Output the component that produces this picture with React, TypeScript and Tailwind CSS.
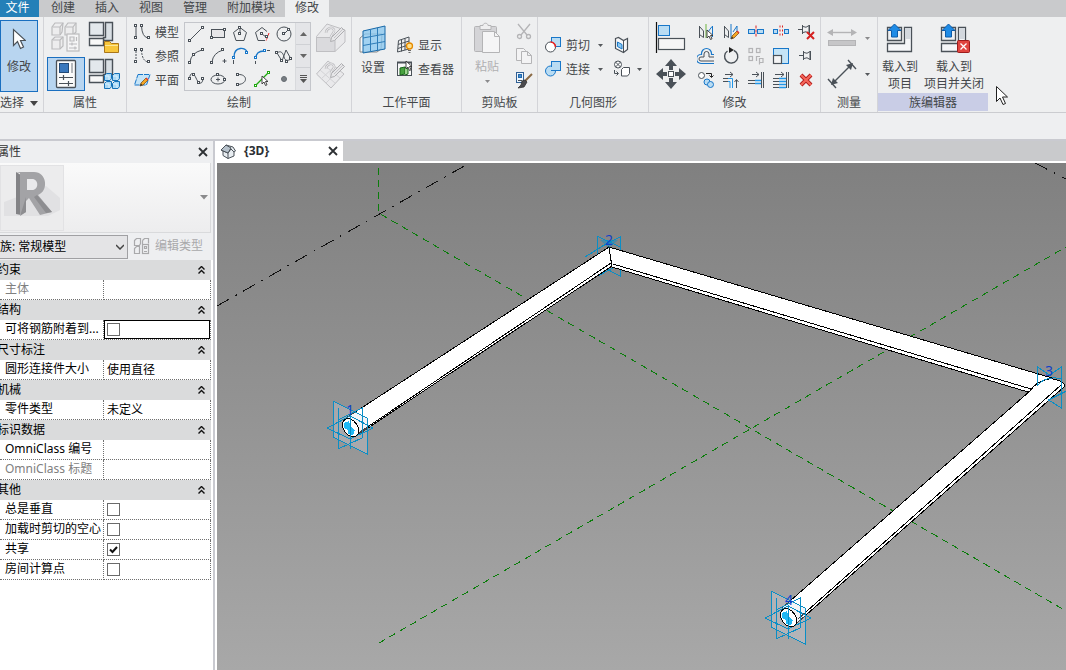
import { useState, type ReactNode } from "react";

const INK = "#4a5158";
const BLUE = "#1877c9";
const SKY = "#b9dcf3";
const OFF = "#b4b4b6";

function Icon({ w, h, children }: { w: number; h: number; children: ReactNode }) {
  return (
    <svg width={w} height={h} viewBox={`0 0 ${w} ${h}`} fill="none" stroke={INK} aria-hidden="true" className="shrink-0">
      {children}
    </svg>
  );
}

function Nodes({ at, color = INK }: { at: [number, number][]; color?: string }) {
  return (
    <g fill="#fff" stroke={color}>
      {at.map(([x, y]) => (
        <rect key={`${x}-${y}`} x={x - 0.5} y={y - 0.5} width="2" height="2" />
      ))}
    </g>
  );
}

function Caret({ dim = false }: { dim?: boolean }) {
  return (
    <svg width="5" height="3" viewBox="0 0 5 3" aria-hidden="true" className="shrink-0">
      <path d="M0 0h5L2.500 3z" fill={dim ? "#8a8a8c" : "#55585c"} />
    </svg>
  );
}

function Panel({ width, title, children, highlight = false, last = false }: { width: string; title: ReactNode; children: ReactNode; highlight?: boolean; last?: boolean }) {
  return (
    <section className={`flex shrink-0 flex-col ${width} ${last ? "" : "border-r border-[#d3d4d8]"}`}>
      <div className="flex h-[76px] items-start">{children}</div>
      <h2 className={`flex h-[18px] items-center justify-center pt-[2px] ${highlight ? "bg-[#c9cde6]" : ""}`}>{title}</h2>
    </section>
  );
}

function IconButton({ label, size, children, active = false, disabled = false }: { label: string; size: string; children: ReactNode; active?: boolean; disabled?: boolean }) {
  return (
    <button
      type="button"
      aria-label={label}
      disabled={disabled}
      className={`flex shrink-0 items-center justify-center ${size} ${active ? "border border-[#1a6fc0] bg-[#b8d5f0]" : ""}`}
    >
      {children}
    </button>
  );
}

const Pencil = ({ x, y }: { x: number; y: number }) => (
  <g transform={`translate(${x} ${y})`}>
    <path d="M0 9l1-3 5-5 2 2-5 5z" fill="#f5a623" stroke="#7a5320" strokeWidth=".8" />
    <path d="M5.500 1.500l1-1 2 2-1 1z" fill="#d33" stroke="none" />
    <path d="M0 9l1-2.500 1.500 1.500z" fill="#333" stroke="none" />
  </g>
);

const Pointer = ({ x, y }: { x: number; y: number }) => (
  <path transform={`translate(${x} ${y})`} d="M0 0v8l2-2 1.500 3.500 1.500-.7L3.500 5.500H6z" fill="#fff" stroke="#333" strokeWidth=".9" />
);

const FamilyBase = () => (
  <g strokeWidth="1.400" fill="#f5f7f9">
    <path d="M1.500 1.500h14v13h-14z" fill="#e3e8ec" />
    <path d="M17.500 1.500h7v18h-9v-3h2z" fill="#d9dfe4" />
    <path d="M1.500 17.500h14v7h-14z" fill="#f8f8f8" />
  </g>
);

const SketchPen = () => (
  <g>
    <path d="M11 11c0-5 7-7 8-3 1 3-4 5-3 8" strokeWidth="2.500" stroke="#bdbdc0" />
    <path d="M11 11c0-5 7-7 8-3 1 3-4 5-3 8" strokeWidth="1" stroke="#f4f4f5" />
    <path d="M15.500 19.500l1-4 10-10 3 3-10 10z" fill="#e6e6e8" stroke="#aeaeb1" />
    <path d="M19 16l9-9" stroke="#c6c6c9" />
  </g>
);

function DrawIcon({ name }: { name: string }) {
  switch (name) {
    case "直线":
      return <Icon w={18} h={18}><path d="M3 15L15 3" /><Nodes at={[[2, 15], [15, 2]]} /></Icon>;
    case "矩形":
      return <Icon w={18} h={18}><rect x="2.500" y="4.500" width="13" height="8" fill="#e6e6e8" /><Nodes at={[[2, 12], [15, 4]]} /></Icon>;
    case "内接多边形":
      return <Icon w={18} h={18}><path d="M9 2.500l6.500 5-2.500 8H5l-2.500-8z" /><path d="M9 3v6" /><Nodes at={[[8, 2], [8, 8]]} /></Icon>;
    case "外接多边形":
      return <Icon w={18} h={18}><path d="M12 15.500H5l-2.500-8 6.500-5 5 4" /><path d="M9 9l4 3" /><path d="M16 8l-3 8" stroke="#e22" strokeDasharray="3 1" /><Nodes at={[[8, 8], [13, 11]]} /></Icon>;
    case "圆形":
      return <Icon w={18} h={18}><circle cx="9" cy="9" r="7" /><path d="M9 9l4-4" /><Nodes at={[[8, 8], [13, 4]]} /></Icon>;
    case "起点-终点-半径弧":
      return <Icon w={18} h={18}><path d="M3 15Q4 6 15 3" /><Nodes at={[[2, 15], [6, 7], [15, 2]]} /></Icon>;
    case "圆心-端点弧":
      return <Icon w={18} h={18}><path d="M3 15Q4 6 14 3M15.500 12v4M13.500 14h4" /><Nodes at={[[2, 15], [13, 2]]} /></Icon>;
    case "相切-端点弧":
      return <Icon w={18} h={18}><path d="M3 10C3-1 15 0 16 5" stroke={BLUE} strokeWidth="1.300" /><path d="M2.500 13v4" /><Nodes at={[[2, 10], [15, 5]]} color={BLUE} /></Icon>;
    case "圆角弧":
      return <Icon w={18} h={18}><path d="M3 11Q3 4 11 4" stroke={BLUE} strokeWidth="1.300" /><path d="M2.500 14v3M14 3.500h3" /><Nodes at={[[2, 10], [11, 3]]} color={BLUE} /></Icon>;
    case "样条曲线":
      return <Icon w={18} h={18}><path d="M2 6l5 8 4-11 5 9M2 6C6 3 8 6 9 10s4 4 7 2" /><Nodes at={[[1, 5], [6, 13], [11, 14], [15, 11]]} /></Icon>;
    case "通过点的样条曲线":
      return <Icon w={18} h={18}><path d="M2.500 9C3 1 7 3 9 8s6 8 7 1" /><Nodes at={[[2, 8], [6, 4], [11, 12], [15, 8]]} /></Icon>;
    case "椭圆":
      return <Icon w={18} h={18}><ellipse cx="9" cy="9.500" rx="7" ry="4.500" /><path d="M9 7.500v4M7 9.500h4" /><Nodes at={[[8, 4], [15, 9]]} /></Icon>;
    case "半椭圆":
      return <Icon w={18} h={18}><path d="M7 4.500C17 4 17 14 7 14.500" /><Nodes at={[[6, 4], [6, 14]]} /></Icon>;
    case "拾取线":
      return <Icon w={18} h={18}><path d="M3 15L15 3" stroke="#1fa80f" strokeWidth="1.300" /><Nodes at={[[2, 15], [15, 2]]} color="#1fa80f" /><Pointer x={9} y={6} /></Icon>;
    default:
      return <Icon w={18} h={18}><circle cx="9" cy="9" r="2.500" fill="#777d82" stroke="#666c72" /></Icon>;
  }
}

const drawTools = ["直线", "矩形", "内接多边形", "外接多边形", "圆形", "起点-终点-半径弧", "圆心-端点弧", "相切-端点弧", "圆角弧", "样条曲线", "通过点的样条曲线", "椭圆", "半椭圆", "拾取线", "点图元"];

function ModifyIcon({ name }: { name: string }) {
  switch (name) {
    case "镜像-拾取轴":
      return <Icon w={18} h={18}><path d="M2.500 3v12M2.500 3.500L6.500 8v6.500l-4-3" /><path d="M15.500 3v11M15 3.500L11 9" stroke={BLUE} /><path d="M9 1v14" stroke="#6cb33f" /><Pointer x={10} y={7} /></Icon>;
    case "镜像-绘制轴":
      return <Icon w={18} h={18}><path d="M2.500 3v12M2.500 3.500L6.500 8v6.500l-4-3" /><path d="M9 1v15M11 9l4-6v7" stroke={BLUE} /><Pencil x={9} y={7} /></Icon>;
    case "拆分图元":
      return <Icon w={18} h={18}><rect x="1.500" y="6.500" width="6" height="4" fill={SKY} stroke={BLUE} /><rect x="10.500" y="6.500" width="6" height="4" fill={SKY} stroke={BLUE} /><path d="M9 2.500v12" stroke="#d22" strokeDasharray="3 1" /></Icon>;
    case "用间隙拆分":
      return <Icon w={18} h={18}><rect x="1.500" y="6.500" width="4" height="4" fill={SKY} stroke={BLUE} /><rect x="12.500" y="6.500" width="4" height="4" fill={SKY} stroke={BLUE} /><path d="M8 2.500v12M10.500 2.500v12" stroke="#d22" strokeDasharray="2 2" /></Icon>;
    case "解锁":
      return <Icon w={18} h={18}><path d="M1 6.500h4M5.500 2v9M6 3.500q3 2 6-1v8q-3-3-6-1M12.500 2v9" /><path d="M10 9l7 7M17 9l-7 7" stroke="#d42020" strokeWidth="2" /></Icon>;
    case "偏移":
      return <Icon w={18} h={18}><path d="M17 14H4a1 1 0 0 1 0-4h3V7a2.500 2.500 0 0 1 5 0v3h5" /><path d="M17 16.500H4a3 3 0 0 1 0-9h.5V6.500a5 5 0 0 1 10 0v1H17" stroke={BLUE} strokeWidth="1.200" /></Icon>;
    case "旋转":
      return <Icon w={18} h={18}><path d="M5.500 4A6.600 6.600 0 1 0 12 3.500" strokeWidth="1.400" /><path d="M7 0l5 3-5 3z" fill="#222" stroke="none" /></Icon>;
    case "阵列":
      return <Icon w={18} h={18}><g stroke={OFF} strokeWidth="1.200"><rect x="2" y="1.500" width="3.500" height="4" /><rect x="9.500" y="1.500" width="3.500" height="4" /><rect x="2" y="9.500" width="3.500" height="4" /><path d="M9.500 14V9.500H13M12.500 17.500v-6H16v4h-3.500" /></g></Icon>;
    case "缩放":
      return <Icon w={18} h={18}><rect x="1.500" y="1.500" width="15" height="15" fill="#c5e4f6" stroke={BLUE} /><rect x="1.500" y="8.500" width="8" height="8" fill="#f4f4f5" strokeWidth="1.200" /></Icon>;
    case "锁定":
      return <Icon w={18} h={18}><path d="M2 8.500h4M6.500 4v9M7 5.500q3 2 6-1v8q-3-3-6-1M13.500 4v9" /></Icon>;
    case "复制":
      return <Icon w={18} h={18}><circle cx="4.500" cy="4.500" r="3" fill="#fff" /><circle cx="10" cy="11" r="3" fill={SKY} stroke={BLUE} /><circle cx="13.500" cy="13.500" r="3" fill={SKY} stroke={BLUE} /><path d="M9 2.500h5.500V6M12.500 4.500l2 2 2-2" stroke="#222" /></Icon>;
    case "修剪/延伸为角":
      return <Icon w={18} h={18}><path d="M3 3.500h8M8 1l3 2.500L8 6M14.500 17V9M12.500 11l2-2.500 2 2.500M1 7.500h5M1 10.500h5" /><path d="M6 7.500h4.500V17M6 10.500h2V17" stroke="#2196e8" /></Icon>;
    case "修剪/延伸单个图元":
      return <Icon w={18} h={18}><path d="M5 3.500h7M9 1l3 2.500L9 6M14.500 1v16M16.500 1v16M1 9.500h7M1 12.500h7" /><path d="M8 9.500h6M8 12.500h6" stroke="#2196e8" strokeWidth="1.300" /></Icon>;
    case "修剪/延伸多个图元":
      return <Icon w={18} h={18}><path d="M3 3.500h9M9 1l3 2.500L9 6M14.500 1v16M16.500 1v16M1 7.500h6M1 10.500h6M1 13.500h6M1 16.500h6" /><path d="M7 7.500h7M7 10.500h7M7 13.500h7M7 16.500h7" stroke="#2196e8" strokeWidth="1.300" /></Icon>;
    default:
      return <Icon w={18} h={18}><path d="M4 4l10 10M14 4L4 14" stroke="#b01818" strokeWidth="4" /><path d="M4 4l10 10M14 4L4 14" stroke="#f4665a" strokeWidth="2.400" /></Icon>;
  }
}

const modifyTools = ["镜像-拾取轴", "镜像-绘制轴", "拆分图元", "用间隙拆分", "解锁", "偏移", "旋转", "阵列", "缩放", "锁定", "复制", "修剪/延伸为角", "修剪/延伸单个图元", "修剪/延伸多个图元", "删除"];

function LoadIcon({ close = false }: { close?: boolean }) {
  return (
    <Icon w={32} h={32}>
      <path d="M3.500 5.500h14v13h-14z" fill="#eef0f2" strokeWidth="1.300" />
      <path d="M20.500 5.500h7v24h-24v-8h17z" fill="#f5f6f8" strokeWidth="1.300" />
      <path d="M21 6h6v11h-6z" fill="#d3d8de" stroke="none" />
      <path d="M10.500 2L17 8.500h-3.500V15h-6V8.500H4z" fill="#1e8be6" stroke="#0d5ba8" />
      {close && (
        <>
          <rect x="19.500" y="18.500" width="12" height="12" rx="1" fill="#e0453f" stroke="#9e1c1c" />
          <path d="M22.500 21.500l6 6M28.500 21.500l-6 6" stroke="#fff" strokeWidth="1.300" />
        </>
      )}
    </Icon>
  );
}

function LabeledButton({ label, icon, disabled = false }: { label: string; icon: ReactNode; disabled?: boolean }) {
  return (
    <button type="button" disabled={disabled} className={`flex h-6 items-center gap-1 whitespace-nowrap ${disabled ? "text-[#b0b0b2]" : ""}`}>
      {icon}
      <span className="pt-[2px]">{label}</span>
    </button>
  );
}

function Ribbon() {
  return (
    <div className="flex h-24 shrink-0 overflow-hidden border-b border-[#cbccd0] bg-[#eeeff0]">
      <Panel width="w-11" title={<button type="button" className="flex w-full items-center gap-[6px] whitespace-nowrap">选择<svg width="8" height="5" viewBox="0 0 8 5"><path d="M0 0h8L4 5z" fill="#444" /></svg></button>}>
        <button type="button" className="mt-[3px] flex h-[72px] w-[38px] flex-col items-center gap-[9px] border border-[#1a6fc0] bg-[#b8d5f0] pt-[7px]">
          <Icon w={14} h={22}>
            <path d="M1.500 1.500v16l4-4 3 7 3-1.500-3-6.500h5z" fill="#fff" strokeWidth="1.200" />
          </Icon>
          <span className="leading-4">修改</span>
        </button>
      </Panel>

      <Panel width="w-[83px]" title="属性">
        <div className="grid grid-cols-[38px_38px] gap-y-[3px] px-[3px] pt-[3px]">
          <IconButton label="类型属性" size="h-[34px] w-[38px]" disabled>
            <Icon w={32} h={32}>
              <g stroke="#bbbbbd" fill="#ededee" strokeWidth="1.200">
                <path d="M2 6l3-4h8l-1 9-2 3H2zM15 6l3-4h8v9l-3 3h-8zM2 19l3-3h8v9l-3 3H2z" />
                <path d="M2 6h8v8M10 6l3-4M15 6h8v8M23 6l3-4M2 19h8v9M10 19l3-3" />
                <rect x="17" y="13" width="12" height="17" fill="#f5f5f6" />
                <path d="M20 16h4v4h-4zM26.500 16v4M19 23h8M19 27h8M22 21.500v3M25 25.500v3" />
              </g>
            </Icon>
          </IconButton>
          <IconButton label="族类别和族参数" size="h-[34px] w-[38px]">
            <Icon w={32} h={32}>
              <FamilyBase />
              <path d="M16.500 20.500h5l2 2h7v9h-14z" fill="#f7c63c" stroke="#a9761a" />
              <path d="M17 24.500h13" stroke="#fce79a" />
            </Icon>
          </IconButton>
          <IconButton label="属性" size="h-[34px] w-[38px]" active>
            <Icon w={24} h={30}>
              <rect x="2.500" y="1.500" width="19" height="27" rx="1" fill="#fbfbfb" strokeWidth="1.300" />
              <rect x="5.500" y="4.500" width="9" height="9" fill="#3a78bd" stroke="#244b78" />
              <path d="M18 4v10" strokeWidth="2" stroke="#b5b8bc" />
              <path d="M5 18.500h14M5 24.500h14M9.500 16v5M14.500 22v5" strokeWidth="1.200" />
            </Icon>
          </IconButton>
          <IconButton label="族类型" size="h-[34px] w-[38px]">
            <Icon w={32} h={32}>
              <FamilyBase />
              <g fill="#a9d8f5" stroke="#1672b8">
                <path d="M16.500 17.500l2-2h5v5l-1.500 2h-5.500zM24.500 17.500l2-2h5v5l-1.500 2h-5.500zM16.500 25.500l2-2h5v5l-1.500 2h-5.500zM24.500 25.500l2-2h5v5l-1.500 2h-5.500z" />
                <path d="M17 18h4v4M25 18h4v4M17 26h4v4M25 26h4v4" stroke="#dff2fd" />
              </g>
            </Icon>
          </IconButton>
        </div>
      </Panel>

      <Panel width="w-[225px]" title="绘制">
        <div className="flex w-[57px] shrink-0 flex-col pl-[6px] pt-[3px]">
          <LabeledButton label="模型" icon={<Icon w={18} h={18}><path d="M3 4v10M8.500 3Q9 14 15 15" /><Nodes at={[[2, 2], [2, 14], [8, 2], [15, 14]]} /></Icon>} />
          <LabeledButton label="参照" icon={<Icon w={18} h={18}><path d="M3 4v10M8.500 3Q9 14 15 15" strokeDasharray="2 1" /><Nodes at={[[2, 2], [2, 14], [8, 2], [15, 14]]} /></Icon>} />
          <LabeledButton label="平面" icon={<Icon w={18} h={18}><path d="M5 3.500h12L13.500 14H1.500z" fill="#c5e4f7" stroke={BLUE} strokeDasharray="5 1" /><Pencil x={7} y={6} /></Icon>} />
        </div>
        <div className="mt-[5px] flex h-[69px] w-[127px] shrink-0 border border-[#c4c6cb]">
          <div className="grid grid-cols-5 grid-rows-3">
            {drawTools.map((t) => (
              <IconButton key={t} label={t} size="h-[22px] w-[22px]"><DrawIcon name={t} /></IconButton>
            ))}
          </div>
          <div className="grid flex-1 grid-rows-3 divide-y divide-[#cfd1d5] border-l border-[#d8dadd] bg-[#e4e5e8]">
            <button type="button" aria-label="向上滚动" className="flex items-center justify-center"><svg width="7" height="4" viewBox="0 0 7 4"><path d="M0 4h7L3.500 0z" fill="#666" /></svg></button>
            <button type="button" aria-label="向下滚动" className="flex items-center justify-center"><svg width="7" height="4" viewBox="0 0 7 4"><path d="M0 0h7L3.500 4z" fill="#666" /></svg></button>
            <button type="button" aria-label="展开" className="flex items-center justify-center"><svg width="7" height="8" viewBox="0 0 7 8"><path d="M0 0h7v1H0zM0 2h7v1H0zM0 4h7L3.500 8z" fill="#555" /></svg></button>
          </div>
        </div>
        <div className="flex flex-col pl-1 pt-[3px]">
          <IconButton label="在面上绘制" size="h-9 w-8" disabled>
            <Icon w={32} h={32}>
              <g stroke="#bfbfc2">
                <path d="M1.500 14.500L12 2l18 6v12L20 29.500H1.500z" fill="#e9e9eb" />
                <path d="M1.500 15.500H20v14H1.500z" fill="#dadadd" />
                <path d="M20 15.500L30 8" />
              </g>
              <SketchPen />
            </Icon>
          </IconButton>
          <IconButton label="在工作平面上绘制" size="h-9 w-8" disabled>
            <Icon w={32} h={32}>
              <g stroke="#bfbfc2">
                <path d="M1.500 16L13 3l16 13-13 14z" fill="#e9e9eb" />
                <path d="M5 12l15 13M9 7l16 13M6 21l14-13M11 25l13-13" stroke="#d3d3d6" />
              </g>
              <SketchPen />
            </Icon>
          </IconButton>
        </div>
      </Panel>

      <Panel width="w-[110px]" title="工作平面">
        <button type="button" className="flex w-[42px] shrink-0 flex-col items-center gap-[5px] pt-2">
          <Icon w={30} h={30}>
            <path d="M2 13l5-4h17l-1 15-4 3H2z" fill="#f7f8f9" stroke="#888" />
            <path d="M5 6L27 1v23L5 28z" fill="#8cc8ef" fillOpacity=".8" stroke="#1768a8" />
            <path d="M12.500 4.500V27M19.500 3v22.500M5 13l22-4M5 20.500l22-4" stroke="#2f7db8" />
          </Icon>
          <span className="leading-4">设置</span>
        </button>
        <div className="flex flex-col pl-[2px] pt-4">
          <LabeledButton label="显示" icon={<Icon w={18} h={18}><path d="M2.500 4.500L13 1v12L1.500 16zM5.500 3.500v12M9 2.500V14M2 8.500L13 5M2 12.500L12 9" /><circle cx="13.500" cy="10" r="3" fill="#ffe08a" stroke="#e58a00" strokeWidth="1.300" /><path d="M12 14.500h3M12.500 16.500h2" stroke="#666" /></Icon>} />
          <LabeledButton label="查看器" icon={<Icon w={18} h={18}><rect x="1.500" y="2.500" width="14" height="13" fill="#f8f8f8" /><path d="M1 2.500h15" strokeWidth="2" /><path d="M4 8l5-1v7l-5 1z" fill="#48a23f" stroke="#19651a" /><path d="M9 7l3 2v5l-3 1" fill="#9bd38d" stroke="#19651a" /><Pointer x={10} y={1} /></Icon>} />
        </div>
      </Panel>

      <Panel width="w-[76px]" title="剪贴板">
        <button type="button" disabled className="flex w-[50px] shrink-0 flex-col items-center gap-[5px] pt-[5px] text-[#b0b0b2]">
          <Icon w={28} h={32}>
            <g stroke={OFF}>
              <rect x="1.500" y="4.500" width="22" height="25" rx="1" fill="#d4d4d7" />
              <path d="M7 7.500v-4h3c0-3 5-3 5 0h3v4z" fill="#efeff0" />
              <path d="M9.500 9.500h12l5 5v16h-17z" fill="#f5f5f6" />
              <path d="M21.500 9.500v5h5" />
            </g>
          </Icon>
          <span className="leading-4">粘贴</span>
          <Caret dim />
        </button>
        <div className="flex flex-col pt-[3px]">
          <IconButton label="剪切到剪贴板" size="h-6 w-6" disabled>
            <Icon w={18} h={18}><g stroke={OFF} strokeWidth="1.300"><path d="M3 1l9 11M15 1L6 12" /><circle cx="4.500" cy="13.500" r="2" /><circle cx="13.500" cy="13.500" r="2" /></g></Icon>
          </IconButton>
          <IconButton label="复制到剪贴板" size="h-6 w-6" disabled>
            <Icon w={18} h={18}><g stroke={OFF} fill="#f3f3f4"><path d="M1.500 1.500h7l2 2v10h-9z" /><path d="M6.500 4.500h6l4 4v8h-10zM12.500 4.500v4h4" /></g></Icon>
          </IconButton>
          <IconButton label="匹配类型属性" size="h-6 w-6">
            <Icon w={18} h={18}><rect x="1.500" y="1.500" width="7" height="10" fill="#eef6fc" stroke="#2f5f95" /><rect x="3.500" y="3.500" width="3" height="3" fill="#3e8dd8" stroke="#2468aa" /><path d="M3 9.500h4" /><path d="M17 3l-7 7" stroke="#8a6a44" strokeWidth="2" /><path d="M10 9l2 2-3 5-6 1 3-3 1-4z" fill="#4b4b4e" stroke="#333" strokeWidth=".8" /></Icon>
          </IconButton>
        </div>
      </Panel>

      <Panel width="w-[111px]" title="几何图形">
        <div className="flex flex-col pl-[6px] pt-4">
          <div className="flex items-center gap-2">
            <LabeledButton label="剪切" icon={<Icon w={18} h={18}><rect x="7.500" y="1.500" width="9" height="9" fill={SKY} stroke={BLUE} /><circle cx="6.500" cy="11" r="5" fill="#fff" /><path d="M6.500 6a5 5 0 0 1 5 5" stroke="#e22" strokeWidth="1.500" /></Icon>} />
            <button type="button" aria-label="剪切选项"><Caret /></button>
          </div>
          <div className="flex items-center gap-2">
            <LabeledButton label="连接" icon={<Icon w={18} h={18}><circle cx="6.500" cy="11" r="5" fill={SKY} stroke={BLUE} /><rect x="7.500" y="1.500" width="9" height="9" fill={SKY} stroke={BLUE} /><path d="M6.500 7h4.500v3H7z" fill={SKY} stroke="none" /></Icon>} />
            <button type="button" aria-label="连接选项"><Caret /></button>
          </div>
        </div>
        <div className="flex flex-col pl-[7px] pt-4">
          <IconButton label="拆分面" size="h-6 w-6">
            <Icon w={18} h={18}><path d="M2.500 2.500l3-1 5 3 4-2v11l-4 3-8-4z" fill="#f7f7f8" strokeWidth="1.200" /><path d="M10.500 4.500v12" /><path d="M4.500 6l4.500 2.500v4.500l-4.500-2.500z" fill="#8cc8ef" stroke={BLUE} /></Icon>
          </IconButton>
          <div className="flex items-center">
            <IconButton label="取消连接几何图形" size="h-6 w-6">
              <Icon w={18} h={18}><circle cx="5" cy="4.500" r="3.500" fill="#fff" /><path d="M2.500 2l5 5M7.500 2l-5 5M1.500 10v3.500H5M3.500 11.500l2 2-2 2" /><path d="M8.500 9.500l2-2h6v6l-2 2.500h-6z" fill="#fff" /></Icon>
            </IconButton>
            <button type="button" aria-label="更多几何工具" className="pl-[3px]"><Caret /></button>
          </div>
        </div>
      </Panel>

      <Panel width="w-[172px]" title="修改">
        <div className="flex w-11 shrink-0 flex-col items-center pt-[3px]">
          <IconButton label="对齐" size="h-9 w-9">
            <Icon w={32} h={32}><path d="M1.500 0v31" stroke="#111" strokeWidth="1.200" /><rect x="3.500" y="3.500" width="11" height="10" fill={SKY} stroke={BLUE} /><rect x="3.500" y="16.500" width="26" height="11" fill="#f5f5f6" strokeWidth="1.200" /></Icon>
          </IconButton>
          <IconButton label="移动" size="h-9 w-9">
            <Icon w={32} h={32}><path d="M16 1l6 7h-4v4h-4V8h-4zM16 31l6-7h-4v-4h-4v4h-4zM1 16l7-6v4h4v4H8v4zM31 16l-7-6v4h-4v4h4v4z" fill={INK} stroke="none" /><rect x="13.500" y="13.500" width="5" height="5" fill="#fff" /></Icon>
          </IconButton>
        </div>
        <div className="grid grid-cols-[repeat(5,25px)] pt-[3px]">
          {modifyTools.map((t) => (
            <IconButton key={t} label={t} size="h-6 w-[25px]" disabled={t === "阵列"}><ModifyIcon name={t} /></IconButton>
          ))}
        </div>
      </Panel>

      <Panel width="w-[57px]" title="测量">
        <div className="flex flex-col pl-[6px] pt-[3px]">
          <div className="flex h-9 items-center gap-2">
            <IconButton label="测量距离" size="h-9 w-[30px]" disabled>
              <Icon w={30} h={22}><path d="M2 5.500h26" stroke={OFF} strokeWidth="1.400" /><path d="M0 5.500L6 2v7zM30 5.500L24 2v7z" fill={OFF} stroke="none" /><rect x="1.500" y="13.500" width="27" height="5" fill="#c6c6c8" stroke={OFF} /></Icon>
            </IconButton>
            <button type="button" aria-label="测量选项"><Caret dim /></button>
          </div>
          <div className="flex h-9 items-center gap-2">
            <IconButton label="对齐尺寸标注" size="h-9 w-[30px]">
              <Icon w={30} h={30}><path d="M5 25L25 5M1 20l8 9M21 1l8 9" strokeWidth="1.400" /><path d="M4 26l2-7 5 5zM26 4l-7 2 5 5z" fill={INK} stroke="none" /></Icon>
            </IconButton>
            <button type="button" aria-label="尺寸标注选项"><Caret /></button>
          </div>
        </div>
      </Panel>

      <Panel width="w-[110px]" title="族编辑器" highlight last>
        <button type="button" className="flex w-11 shrink-0 flex-col items-center pt-[5px] leading-[17px]">
          <LoadIcon />
          <span className="mt-1">载入到</span>
          <span>项目</span>
        </button>
        <button type="button" className="flex w-16 shrink-0 flex-col items-center whitespace-nowrap pt-[5px] leading-[17px]">
          <LoadIcon close />
          <span className="mt-1">载入到</span>
          <span>项目并关闭</span>
        </button>
      </Panel>
    </div>
  );
}

type Row = { label: string; value?: string; check?: boolean; focus?: boolean; dim?: boolean };

const groups: { name: string; rows: Row[] }[] = [
  { name: "约束", rows: [{ label: "主体", dim: true }] },
  { name: "结构", rows: [{ label: "可将钢筋附着到...", check: false, focus: true }] },
  { name: "尺寸标注", rows: [{ label: "圆形连接件大小", value: "使用直径" }] },
  { name: "机械", rows: [{ label: "零件类型", value: "未定义" }] },
  { name: "标识数据", rows: [{ label: "OmniClass 编号" }, { label: "OmniClass 标题", dim: true }] },
  { name: "其他", rows: [{ label: "总是垂直", check: false }, { label: "加载时剪切的空心", check: false }, { label: "共享", check: true }, { label: "房间计算点", check: false }] },
];

function Check({ label, initial }: { label: string; initial: boolean }) {
  const [on, setOn] = useState(initial);
  return (
    <span className="grid h-[13px] w-[13px]">
      <input type="checkbox" aria-label={label} checked={on} onChange={() => setOn(!on)} className="col-start-1 row-start-1 h-[13px] w-[13px] appearance-none border border-[#6a6a6a] bg-white" />
      {on && (
        <svg viewBox="0 0 13 13" className="pointer-events-none col-start-1 row-start-1 h-[13px] w-[13px]">
          <path d="M3 6.500l2.500 2.500 4.500-5" fill="none" stroke="#111" strokeWidth="2" />
        </svg>
      )}
    </span>
  );
}

function Close({ label }: { label: string }) {
  return (
    <button type="button" aria-label={label} className="flex h-4 w-4 items-center justify-center">
      <svg width="10" height="10" viewBox="0 0 10 10"><path d="M1 1l8 8M9 1L1 9" stroke="#2d3033" strokeWidth="1.800" /></svg>
    </button>
  );
}

function Properties() {
  return (
    <aside className="flex w-[213px] shrink-0 flex-col overflow-hidden bg-white text-black">
      <header className="flex h-[22px] items-center justify-between bg-[#eeeff1] pb-px pr-[2px] text-[#333]">
        <h2 className="-ml-[3px]">属性</h2>
        <Close label="关闭属性" />
      </header>
      <div className="h-[70px] bg-[#eeeff1] pr-[2px]">
        <button type="button" aria-label="类型选择器" className="flex h-[70px] w-full items-center justify-between border-b border-r border-[#d9dadc] bg-linear-to-b from-[#fafafa] to-[#ededee] pr-[2px]">
          <span className="flex h-[66px] w-16 items-center justify-center border border-[#e2e2e4] bg-[#ececed]">
            <svg width="60" height="60" viewBox="0 0 60 60" aria-hidden="true">
              <path d="M2 34L44 18l14 12v12L46 48H2z" fill="#e1e1e3" />
              <path d="M14 4l5 3v40l-5-1z" fill="#838386" />
              <path d="M14 4h18c13 0 15 19 4 23l14 17-12 3-11-17-3 3v11l-6 4V5z" fill="#a3a3a6" />
              <path d="M25 11v11h5c7 0 7-11 0-11z" fill="#e9e9eb" />
              <path d="M24 29l-5 16v2l5-3zM35 27l15 17-6 1-12-16z" fill="#8d8d90" />
            </svg>
          </span>
          <svg width="8" height="5" viewBox="0 0 8 5"><path d="M0 0h8L4 4.500z" fill="#8a8a8c" /></svg>
        </button>
      </div>
      <div className="flex h-[27px] items-center bg-[#eeeff1]">
        <span className="relative flex w-32 shrink-0 items-center">
          <select aria-label="族" className="h-6 w-full appearance-none border border-l-0 border-[#a0a0a3] bg-[#e4e4e6]">
            <option>族: 常规模型</option>
          </select>
          <svg width="8" height="6" viewBox="0 0 8 6" className="pointer-events-none absolute right-1"><path d="M0 1l4 4 4-4" fill="none" stroke="#444" strokeWidth="1.500" /></svg>
        </span>
        <button type="button" disabled className="flex items-center gap-1 pb-px pl-[5px] text-[#a9a9ab]">
          <Icon w={18} h={18}><g stroke="#a9a9ab" strokeWidth="1.200"><path d="M1.500 3.500l2-2h4v5l-1 2h-5zM9.500 3.500l2-2h4v5M1.500 11.500l2-2h3v7h-5zM9.500 3.500V7" /><rect x="9.500" y="7.500" width="6" height="9" /><path d="M11.500 9.500h2v2h-2zM11 14.500h3" /></g></Icon>
          编辑类型
        </button>
      </div>
      <table className="w-[211px] table-fixed border-separate border-spacing-0">
        <colgroup><col className="w-[104px]" /><col /></colgroup>
        {groups.map((g) => (
          <tbody key={g.name}>
            <tr className="h-5 bg-[#dadbdc]">
              <th colSpan={2} scope="colgroup" className="p-0 text-left font-normal">
                <button type="button" className="flex h-5 w-full items-center justify-between pb-px pr-[6px]">
                  <span className="-ml-[3px]">{g.name}</span>
                  <svg width="7" height="8" viewBox="0 0 7 8"><path d="M.5 3.500l3-3 3 3M.5 7.500l3-3 3 3" fill="none" stroke="#111" strokeWidth="1.400" /></svg>
                </button>
              </th>
            </tr>
            {g.rows.map((r) => (
              <tr key={r.label} className="h-5">
                <th scope="row" className="border-b border-r border-dotted border-[#707070] p-0 text-left font-normal">
                  <span className={`block h-[19px] overflow-hidden whitespace-nowrap pl-[5px] leading-[18px] ${r.dim ? "text-[#808080]" : ""}`}>{r.label}</span>
                </th>
                <td className="border-b border-r border-dotted border-[#707070] p-0">
                  <div className={`flex h-[19px] items-center pl-[3px] ${r.focus ? "outline outline-1 -outline-offset-1 outline-black" : ""}`}>
                    {r.check === undefined ? <span className="leading-[18px]">{r.value}</span> : <Check label={r.label} initial={r.check} />}
                  </div>
                </td>
              </tr>
            ))}
          </tbody>
        ))}
      </table>
    </aside>
  );
}

function PipeEnd({ x, y }: { x: number; y: number }) {
  return (
    <g transform={`translate(${x} ${y})`} stroke="#0a8ec6" fill="none">
      <path d="M-17 -26L17 -9v36L-17 10z" fill="#d8d8e0" fillOpacity=".3" />
      <path d="M-12 -7L12 -19v30L-12 22zM-12 -19v12M-23 1L0 -11 23 1 0 12z" />
      <ellipse cx="0" cy="1" rx="7" ry="10" transform="rotate(-35)" fill="#fff" stroke="#000" />
      <path d="M-6 -4l5-2 2 6 4 3-2 5-5-1v-4l-4-2z" fill="#20b8f4" stroke="none" />
      <path d="M0 -12v34" />
    </g>
  );
}

function Model() {
  return (
    <svg viewBox="217 163 849 507" preserveAspectRatio="xMinYMin slice" role="img" aria-label="三维视图" className="h-full w-full" fill="none">
      <g shapeRendering="crispEdges">
        <g stroke="#111" strokeDasharray="14 7 2 7">
          <path d="M217 306L466 165" />
          <path d="M1035 163l31 16" />
        </g>
        <g stroke="#0b7d0b" strokeDasharray="7 5">
          <path d="M378.500 168v45L1066 611" />
          <path d="M379 643L1066 247" />
        </g>
        <g stroke="#0a8ec6">
          <path d="M585 257l24-15M597.500 236v20M620.500 236v20M598 276l22-12M597 264l23 12v-9" />
        </g>
        <g fill="#fff" stroke="#000">
          <path d="M346 418L609 247l3 19L356 436z" />
          <path d="M357 434L611 263" />
          <path d="M609 247l443 131-24 14L612 267z" />
          <path d="M613 264l418 125" />
          <path d="M1030 391C1036 382 1046 378 1053 379Q1064 381 1065 386L797 623l-15-15z" />
          <path d="M1061 385L798 619" />
        </g>
        <PipeEnd x={350} y={427} />
        <PipeEnd x={788} y={617} />
        <g stroke="#0a8ec6">
          <path d="M597 236l23 11M620 237l-23 12" />
          <path d="M1037.500 386v-19l12 8 12-8v41l-13-8 18-9M1038 385q8-10 24-6" />
        </g>
      </g>
      <path d="M600 240h18l-9 8z" fill="#0a8ec6" fillOpacity=".5" />
      <g fill="#1240c8" fontSize="14" textAnchor="middle" className="font-['Noto_Sans']">
        <text x="350" y="415">1</text>
        <text x="609" y="245">2</text>
        <text x="1049" y="376">3</text>
        <text x="789" y="605">4</text>
      </g>
    </svg>
  );
}

const tabs = ["创建", "插入", "视图", "管理", "附加模块", "修改"];

export default function App() {
  return (
    <div className="relative flex h-screen flex-col overflow-hidden bg-[#eeeff1] font-['Noto_Sans','Noto_Sans_CJK_SC',sans-serif] text-xs text-[#44474a]">
      <nav className="flex h-[17px] shrink-0 overflow-hidden bg-[#c9cacc] leading-[15px]">
        <button type="button" className="mr-[2px] w-[39px] bg-[#2480b8] pb-[2px] pr-1 text-white">文件</button>
        {tabs.map((t) => (
          <button key={t} type="button" className={`px-[10px] pb-[2px] ${t === "修改" ? "bg-[#eeeff0]" : ""}`}>{t}</button>
        ))}
      </nav>
      <Ribbon />
      <div className="h-[26px] shrink-0" />
      <div className="flex min-h-0 flex-1 border-t-2 border-[#c9cad0]">
        <Properties />
        <main className="flex min-w-0 flex-1 flex-col border-l-2 border-[#c9cad0] bg-white pl-[2px]">
          <div className="flex h-5 shrink-0 bg-[#c9cacc]">
            <div className="flex w-[126px] items-center bg-white pl-[2px] pr-[2px] text-[#2c2f33]">
              <Icon w={18} h={18}>
                <path d="M2 8l5-5 7 2 2.500 4-1.500 1v4l-6 2.500-5-3V9z" fill="#e8edf1" />
                <path d="M9 16.500V10M4 9l5 2 3-4 3 3" />
                <path d="M7 3L2 8l7 3 3-5z" fill="#b6c1cb" />
              </Icon>
              <button type="button" className="ml-[7px] flex-1 text-left font-bold">{"{3D}"}</button>
              <Close label="关闭视图" />
            </div>
          </div>
          <div className="mt-[2px] min-h-0 flex-1 bg-linear-to-b from-[#808080] to-[#a8a8a8]">
            <Model />
          </div>
        </main>
      </div>
      <svg width="14" height="20" viewBox="0 0 14 20" className="pointer-events-none absolute left-[996px] top-[86px]" aria-hidden="true">
        <path d="M.5.5v15l3.500-3.500 3 6.500 2.500-1-3-6.500h5z" fill="#fff" stroke="#222" />
      </svg>
    </div>
  );
}
